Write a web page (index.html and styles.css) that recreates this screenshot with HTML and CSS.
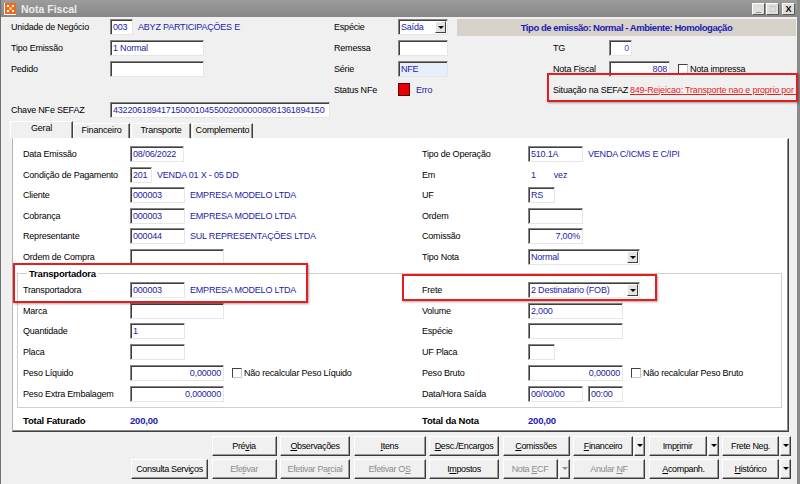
FILE: index.html
```html
<!DOCTYPE html>
<html>
<head>
    <meta charset="UTF-8">
    <title>Nota Fiscal</title>
    <link rel="stylesheet" href="styles.css">
</head>
<body>
<div class="window">
    <!-- barra de titulo -->
    <div class="titlebar">
        <span class="app-icon">
            <svg width="11" height="11" viewBox="0 0 11 11">
                <rect width="11" height="11" fill="#f06a1c"/>
                <path d="M2 2h2v2H2zM7 2h2v2H7zM4.5 4.5h2v2h-2zM2 7h2v2H2zM7 7h2v2H7z" fill="#fff"/>
            </svg>
        </span>
        <span class="title">Nota Fiscal</span>
        <div class="wincontrols">
            <span class="wbtn">_</span>
            <span class="wbtn off">&#9633;</span>
            <span class="wbtn close">X</span>
        </div>
    </div>

    <!-- cabecalho -->
    <div class="header">
        <span class="lbl">Unidade de Negócio</span>
        <div class="fld"><span class="inp w23">003</span><span class="desc">ABYZ PARTICIPAÇÕES E</span></div>
        <span class="lbl">Espécie</span>
        <div class="fld"><span class="combo w50"><span class="val">Saída</span><span class="drop"></span></span></div>
        <div class="rcell"><div class="ambiente">Tipo de emissão: Normal - Ambiente: Homologação</div></div>

        <span class="lbl">Tipo Emissão</span>
        <div class="fld"><span class="inp w94">1 Normal</span></div>
        <span class="lbl">Remessa</span>
        <div class="fld"><span class="inp w50"></span></div>
        <div class="rcell pad"><span class="rlbl">TG</span><span class="inp num w23 roxo">0</span></div>

        <span class="lbl">Pedido</span>
        <div class="fld"><span class="inp w94"></span></div>
        <span class="lbl">Série</span>
        <div class="fld"><span class="inp w50 azul">NFE</span></div>
        <div class="rcell pad"><span class="rlbl">Nota Fiscal</span><span class="inp num w61">808</span><span class="chk"><span class="box"></span>Nota impressa</span></div>

        <span></span>
        <span></span>
        <span class="lbl">Status NFe</span>
        <div class="fld"><span class="status"></span><span class="desc">Erro</span></div>
        <div class="rcell pad"><span class="rlbl sit">Situação na SEFAZ</span><span class="sefaz">849-Rejeicao: Transporte nao e proprio por ser veiculo de terceiros</span></div>

        <span class="lbl">Chave NFe SEFAZ</span>
        <div class="fld"><span class="inp w220">43220618941715000104550020000008081361894150</span></div>
    </div>

    <!-- abas -->
    <div class="tabs">
        <span class="tab active">Geral</span>
        <span class="tab t-fin">Financeiro</span>
        <span class="tab t-tra">Transporte</span>
        <span class="tab t-com">Complemento</span>
    </div>

    <div class="panel">
        <div class="grid">
            <span class="lbl">Data Emissão</span>
            <div class="fld"><span class="inp w54">08/06/2022</span></div>
            <span class="lbl">Tipo de Operação</span>
            <div class="fld"><span class="inp w55">510.1A</span><span class="desc">VENDA C/ICMS E C/IPI</span></div>

            <span class="lbl">Condição de Pagamento</span>
            <div class="fld"><span class="inp w22">201</span><span class="desc">VENDA 01 X - 05 DD</span></div>
            <span class="lbl">Em</span>
            <div class="fld"><span class="txt um">1</span><span class="txt">vez</span></div>

            <span class="lbl">Cliente</span>
            <div class="fld"><span class="inp w55">000003</span><span class="desc">EMPRESA MODELO LTDA</span></div>
            <span class="lbl">UF</span>
            <div class="fld"><span class="inp w27">RS</span></div>

            <span class="lbl">Cobrança</span>
            <div class="fld"><span class="inp w55">000003</span><span class="desc">EMPRESA MODELO LTDA</span></div>
            <span class="lbl">Ordem</span>
            <div class="fld"><span class="inp w55"></span></div>

            <span class="lbl">Representante</span>
            <div class="fld"><span class="inp w55">000044</span><span class="desc">SUL REPRESENTAÇÕES LTDA</span></div>
            <span class="lbl">Comissão</span>
            <div class="fld"><span class="inp num w55">7,00%</span></div>

            <span class="lbl">Ordem de Compra</span>
            <div class="fld"><span class="inp w94"></span></div>
            <span class="lbl">Tipo Nota</span>
            <div class="fld"><span class="combo w110"><span class="val">Normal</span><span class="drop"></span></span></div>
        </div>

        <fieldset class="group">
            <legend>Transportadora</legend>
            <div class="grid">
                <span class="lbl">Transportadora</span>
                <div class="fld"><span class="inp w55">000003</span><span class="desc">EMPRESA MODELO LTDA</span></div>
                <span class="lbl">Frete</span>
                <div class="fld"><span class="combo w110"><span class="val">2 Destinatario (FOB)</span><span class="drop"></span></span></div>

                <span class="lbl">Marca</span>
                <div class="fld"><span class="inp w94"></span></div>
                <span class="lbl">Volume</span>
                <div class="fld"><span class="inp w95">2,000</span></div>

                <span class="lbl">Quantidade</span>
                <div class="fld"><span class="inp w55">1</span></div>
                <span class="lbl">Espécie</span>
                <div class="fld"><span class="inp w95"></span></div>

                <span class="lbl">Placa</span>
                <div class="fld"><span class="inp w55"></span></div>
                <span class="lbl">UF Placa</span>
                <div class="fld"><span class="inp w27"></span></div>

                <span class="lbl">Peso Líquido</span>
                <div class="fld"><span class="inp num w94">0,00000</span><span class="chk"><span class="box"></span>Não recalcular Peso Líquido</span></div>
                <span class="lbl">Peso Bruto</span>
                <div class="fld"><span class="inp num w95">0,00000</span><span class="chk"><span class="box"></span>Não recalcular Peso Bruto</span></div>

                <span class="lbl">Peso Extra Embalagem</span>
                <div class="fld"><span class="inp num w94">0,000000</span></div>
                <span class="lbl">Data/Hora Saída</span>
                <div class="fld"><span class="inp w55">00/00/00</span><span class="inp w35 hora">00:00</span></div>
            </div>
        </fieldset>

        <div class="grid totais">
            <span class="lbl">Total Faturado</span>
            <span class="total">200,00</span>
            <span class="lbl">Total da Nota</span>
            <span class="total">200,00</span>
        </div>
    </div>

    <!-- botoes -->
    <div class="buttons">
        <span></span>
        <span class="btn">Pré<u>v</u>ia</span>
        <span class="btn"><u>O</u>bservações</span>
        <span class="btn"><u>I</u>tens</span>
        <span class="btn"><u>D</u>esc./Encargos</span>
        <span class="btn"><u>C</u>omissões</span>
        <span class="split"><span class="btn"><u>F</u>inanceiro</span><span class="btn arrow"></span></span>
        <span class="split"><span class="btn">Imp<u>r</u>imir</span><span class="btn arrow"></span></span>
        <span class="split"><span class="btn">Frete Neg.</span><span class="btn arrow"></span></span>

        <span class="btn">Consulta Servi<u>ç</u>os</span>
        <span class="btn dis">Efe<u>t</u>ivar</span>
        <span class="btn dis">Efetivar Pa<u>r</u>cial</span>
        <span class="btn dis">Efetivar O<u>S</u></span>
        <span class="btn">I<u>m</u>postos</span>
        <span class="split"><span class="btn dis">Nota <u>E</u>CF</span><span class="btn arrow dis"></span></span>
        <span class="btn dis">Anular <u>N</u>F</span>
        <span class="btn"><u>A</u>companh.</span>
        <span class="split"><span class="btn"><u>H</u>istórico</span><span class="btn arrow"></span></span>
    </div>

    <!-- marcacoes em vermelho -->
    <div class="mark m-sefaz"></div>
    <div class="mark m-transp"></div>
    <div class="mark m-frete"></div>
</div>
</body>
</html>
```

FILE: styles.css
```css
* {
    box-sizing: border-box;
}

html, body {
    margin: 0;
    padding: 0;
}

body {
    width: 800px;
    height: 484px;
    overflow: hidden;
    background: #f0f0f0;
    font-family: "Liberation Sans", Arial, sans-serif;
    font-size: 9px;
    letter-spacing: -0.2px;
    color: #000;
}

.window {
    position: relative;
    width: 800px;
    height: 484px;
    border-left: 1px solid #707070;
    border-right: 3px solid #8a8a8a;
    background: #f0f0f0;
}

/* barra de titulo */
.titlebar {
    height: 17px;
    display: flex;
    align-items: center;
    padding-left: 3px;
    background: linear-gradient(#9c9c9c, #878787);
}

.app-icon {
    width: 12px;
    height: 12px;
    display: flex;
    align-items: center;
    justify-content: center;
    background: #fff;
}

.title {
    margin-left: 5px;
    color: #ececec;
    font-weight: bold;
    font-size: 10.5px;
    letter-spacing: 0;
}

.wincontrols {
    margin-left: auto;
    display: flex;
    gap: 1px;
    padding-right: 2px;
}

.wbtn {
    width: 13px;
    height: 12px;
    background: #e0dfdb;
    border: 1px solid;
    border-color: #fff #5a5a5a #5a5a5a #fff;
    font: bold 9px "Liberation Sans", sans-serif;
    line-height: 10px;
    text-align: center;
}

.wbtn.off {
    color: #aaa;
    font-weight: normal;
}

.wbtn.close {
    margin-left: 2px;
}

/* campos */
.lbl {
    white-space: nowrap;
}

.fld {
    display: flex;
    align-items: center;
    white-space: nowrap;
}

.inp {
    display: inline-block;
    height: 16px;
    line-height: 14px;
    padding: 0 2px;
    background: #fff;
    border: 1px solid;
    border-color: #858585 #e6e6e6 #e6e6e6 #858585;
    box-shadow: inset 1px 1px 0 #3f3f3f;
    color: #2323a8;
    white-space: nowrap;
    overflow: hidden;
    flex: none;
}

.inp.num {
    text-align: right;
}

.inp.roxo {
    color: #6a3ec8;
}

.inp.azul {
    background: #e6effb;
}

.inp.hora {
    margin-left: 5px;
}

.w22 { width: 22px; }
.w23 { width: 23px; }
.w27 { width: 27px; }
.w35 { width: 35px; }
.w50 { width: 50px; }
.w54 { width: 54px; }
.w55 { width: 55px; }
.w61 { width: 61px; }
.w94 { width: 94px; }
.w95 { width: 95px; }
.w110 { width: 112px; }
.w220 { width: 220px; }

.desc {
    margin-left: 5px;
    color: #2323a8;
}

.txt {
    color: #2323a8;
}

.txt.um {
    margin: 0 18px 0 3px;
}

.combo {
    display: flex;
    align-items: center;
    height: 16px;
    background: #fff;
    border: 1px solid;
    border-color: #858585 #e6e6e6 #e6e6e6 #858585;
    box-shadow: inset 1px 1px 0 #3f3f3f;
    color: #2323a8;
    flex: none;
}

.combo .val {
    flex: 1;
    padding-left: 2px;
    line-height: 14px;
    overflow: hidden;
}

.drop {
    width: 11px;
    height: 12px;
    margin-right: 1px;
    background: #e4e3df;
    border: 1px solid;
    border-color: #fff #404040 #404040 #fff;
    position: relative;
}

.drop::after {
    content: "";
    position: absolute;
    left: 2px;
    top: 4px;
    border-left: 3px solid transparent;
    border-right: 3px solid transparent;
    border-top: 3px solid #000;
}

.chk {
    display: flex;
    align-items: center;
    margin-left: 8px;
    white-space: nowrap;
}

.chk .box {
    width: 10px;
    height: 10px;
    margin-right: 2px;
    background: #fff;
    border: 1px solid;
    border-color: #404040 #c8c8c8 #c8c8c8 #404040;
}

/* cabecalho */
.header {
    position: relative;
    display: grid;
    grid-template-columns: 99px 224px 64px 59px 1fr;
    grid-auto-rows: 20.75px;
    align-items: center;
    padding-left: 10px;
}

.rcell {
    display: flex;
    align-items: center;
    min-width: 0;
    overflow: hidden;
    white-space: nowrap;
}

.rcell.pad {
    padding-left: 96px;
}

.ambiente {
    flex: 1;
    height: 17px;
    margin-right: 1px;
    background: #d6d2ca;
    color: #1a1ab4;
    font-weight: bold;
    line-height: 17px;
    text-align: center;
    font-size: 9.5px;
    letter-spacing: -0.45px;
}

.rlbl {
    width: 56px;
    flex: none;
}

.rlbl.sit {
    width: 77px;
}

.sefaz {
    color: #e81c1c;
    text-decoration: underline;
    white-space: nowrap;
}

.status {
    width: 12px;
    height: 13px;
    background: #e80000;
    border: 1px solid #5a0000;
}

.header .status + .desc {
    margin-left: 6px;
}

/* abas */
.tabs {
    display: flex;
    align-items: flex-end;
    height: 17px;
    margin-left: 9px;
    position: relative;
    z-index: 1;
}

.tab {
    height: 15px;
    line-height: 13px;
    text-align: center;
    border: 1px solid;
    border-bottom: 0;
    border-color: #fff #404040 #404040 #fff;
    box-shadow: inset -1px 0 0 #8a8a8a;
    background: #f0f0f0;
    width: 58px;
}

.tab.active {
    height: 17px;
    width: 63px;
}

.tab.t-fin { width: 57px; }
.tab.t-tra { width: 60px; margin-left: 1px; }
.tab.t-com { width: 61px; margin-left: 1px; }

.panel {
    margin: 0 8px 0 11px;
    height: 294px;
    background: #fff;
    border: 1px solid;
    border-color: #fff #404040 #404040 #b4b4b4;
    box-shadow: inset -1px -1px 0 #8a8a8a;
    padding: 5px 6px 0 4px;
}

.grid {
    display: grid;
    grid-template-columns: 107px 292px 106px 1fr;
    grid-auto-rows: 20.5px;
    align-items: center;
    padding-left: 6px;
}

.group {
    margin: 1px 0 0;
    padding: 0 0 3px 5px;
    border: 1px solid #d0d0d0;
}

.group legend {
    margin-left: 4px;
    padding: 0 2px;
    font-weight: bold;
    font-size: 9.5px;
    line-height: 12px;
}

.group .grid {
    grid-auto-rows: 20.7px;
    padding-left: 0;
}

.totais {
    grid-auto-rows: 20px;
    margin-top: 3px;
    font-weight: bold;
    font-size: 9.5px;
}

.total {
    color: #1a1ab4;
}

/* botoes */
.buttons {
    display: grid;
    grid-template-columns: 77px 65px 70px 72px 70px 67px 72px 70px 69px;
    grid-auto-rows: 20px;
    column-gap: 3.5px;
    row-gap: 3px;
    justify-content: end;
    padding: 4px 6px 0 0;
    font-size: 9px;
    letter-spacing: -0.35px;
}

.btn {
    display: block;
    line-height: 18px;
    text-align: center;
    background: #f0f0f0;
    border: 1px solid;
    border-color: #fff #3a3a3a #3a3a3a #fff;
    box-shadow: inset -1px -1px 0 #9a9a9a;
    white-space: nowrap;
    overflow: hidden;
}

.btn.dis {
    color: #8d8d8d;
}

.split {
    display: flex;
    gap: 1px;
}

.split .btn {
    flex: 1;
}

.split .btn.arrow {
    flex: none;
    width: 11px;
    position: relative;
}

.btn.arrow::after {
    content: "";
    position: absolute;
    left: 2px;
    top: 7px;
    border-left: 3px solid transparent;
    border-right: 3px solid transparent;
    border-top: 3px solid #000;
}

.btn.arrow.dis::after {
    border-top-color: #8d8d8d;
}

/* marcacoes */
.mark {
    position: absolute;
    border: 2px solid #e41e1e;
    box-shadow: 1px 1px 2px rgba(0, 0, 0, 0.35);
}

.m-sefaz {
    left: 546px;
    top: 73px;
    width: 251px;
    height: 29px;
}

.m-transp {
    left: 12px;
    top: 263px;
    width: 295px;
    height: 40px;
}

.m-frete {
    left: 401px;
    top: 274px;
    width: 255px;
    height: 27px;
}
```
